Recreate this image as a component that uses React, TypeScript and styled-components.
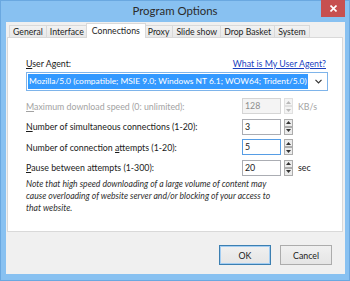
import React from "react";
import styled, { createGlobalStyle, css } from "styled-components";

const Global = createGlobalStyle`
  html, body { margin: 0; padding: 0; }
  body { width: 350px; height: 281px; overflow: hidden; font-family: Lato, "Noto Sans", sans-serif; }
`;

const Window = styled.div`
  width: 350px;
  height: 281px;
  box-sizing: border-box;
  background: #88c1f1;
  border: 1px solid #6aa8e0;
  display: flex;
  flex-direction: column;
`;

const TitleBar = styled.div`
  height: 21px;
  display: grid;
  grid-template-columns: 1fr auto 1fr;
  align-items: start;
`;

const Title = styled.div`
  grid-column: 2;
  font-family: Lato, sans-serif;
  font-size: 11.4px;
  line-height: 20px;
  color: #2b2b2b;
  white-space: nowrap;
`;

const CloseBtn = styled.div`
  grid-column: 3;
  justify-self: end;
  margin-right: 4px;
  margin-top: -1px;
  width: 24px;
  height: 17px;
  background: #c75050;
  color: #fff;
  display: flex;
  align-items: center;
  justify-content: center;
`;

const Client = styled.div`
  flex: 1;
  margin: 0 4px 6px 5px;
  background: #f0f0f0;
  display: flex;
  flex-direction: column;
  padding: 1px 2px 0 1px;
`;

const TabRow = styled.div`
  display: flex;
  align-items: flex-end;
  padding-left: 3px;
  height: 14px;
  position: relative;
  z-index: 1;
`;

const Tab = styled.div<{ $active?: boolean }>`
  box-sizing: border-box;
  font-size: 8.7px;
  color: #1e1e1e;
  border: 1px solid #d9d9d9;
  border-bottom: none;
  margin-left: -1px;
  padding: 0 3px;
  height: 12px;
  line-height: 11px;
  white-space: nowrap;
  background: linear-gradient(#f2f2f2, #e8e8e8);
  ${(p) =>
    p.$active &&
    css`
      height: 15px;
      line-height: 13px;
      background: #fff;
      margin: 0 -1px -1px -2px;
      padding: 0 5px;
      position: relative;
      z-index: 2;
    `}
`;

const Panel = styled.div`
  height: 195px;
  box-sizing: border-box;
  background: #fff;
  border: 1px solid #d9d9d9;
  padding: 18px 14px 0 18px;
  display: flex;
  flex-direction: column;
  font-size: 8.8px;
  color: #1a1a1a;
  white-space: nowrap;
`;

const LabelRow = styled.div`
  display: flex;
  justify-content: space-between;
  align-items: center;
  height: 14px;
  padding-right: 2px;
`;

const Link = styled.span`
  color: #1a3fbf;
  text-decoration: underline;
`;

const Combo = styled.div`
  margin-top: 2px;
  height: 19px;
  box-sizing: border-box;
  border: 1px solid #7eb4ea;
  display: flex;
  align-items: center;
  padding: 0 1px;
  overflow: hidden;
`;

const Selected = styled.span`
  background: #3399ff;
  color: #fff;
  font-size: 8.45px;
  line-height: 15px;
  padding: 0 1px;
`;

const Chevron = styled.span`
  margin-left: auto;
  margin-right: 4px;
  display: flex;
`;

const Rows = styled.div`
  margin-top: 7px;
  display: flex;
  flex-direction: column;
  gap: 4.5px;
`;

const Row = styled.div<{ $disabled?: boolean }>`
  display: grid;
  grid-template-columns: 216px 40px 14px auto;
  align-items: center;
  height: 16px;
  color: ${(p) => (p.$disabled ? "#a3a3a3" : "#1a1a1a")};
`;

const Box = styled.div<{ $disabled?: boolean; $focus?: boolean }>`
  box-sizing: border-box;
  height: 16px;
  width: 39px;
  border: 1px solid ${(p) => (p.$focus ? "#569de5" : p.$disabled ? "#d5d5d5" : "#abadb3")};
  background: ${(p) => (p.$disabled ? "#f4f4f4" : "#fff")};
  color: ${(p) => (p.$disabled ? "#8d8d8d" : "#1a1a1a")};
  padding-left: 2px;
  line-height: 14px;
`;

const Spin = styled.div`
  display: flex;
  flex-direction: column;
  margin-left: 2px;
  width: 9px;
`;

const SpinBtn = styled.div<{ $disabled?: boolean }>`
  height: 8px;
  box-sizing: border-box;
  border: 1px solid ${(p) => (p.$disabled ? "#e0e0e0" : "#acacac")};
  background: ${(p) => (p.$disabled ? "#f4f4f4" : "#ececec")};
  display: flex;
  align-items: center;
  justify-content: center;
`;

const Unit = styled.span`
  padding-left: 2px;
`;

const Note = styled.div`
  margin-top: 2px;
  font-style: italic;
  font-size: 8.6px;
  color: #2e2e2e;
  line-height: 12px;
`;

const Footer = styled.div`
  flex: 1;
  display: flex;
  justify-content: flex-end;
  align-items: center;
  gap: 9px;
  padding-right: 11px;
  padding-top: 4px;
`;

const Button = styled.div<{ $default?: boolean }>`
  box-sizing: border-box;
  width: 52px;
  height: 20px;
  border: 1px solid ${(p) => (p.$default ? "#3c7fb1" : "#acacac")};
  ${(p) => p.$default && css`box-shadow: inset 0 0 0 1px #a3cdf2;`}
  background: linear-gradient(#f0f0f0, #e5e5e5);
  font-size: 8.8px;
  color: #1a1a1a;
  display: flex;
  align-items: center;
  justify-content: center;
`;

const U = styled.span`
  text-decoration: underline;
`;

function Arrow({ up, disabled }: { up?: boolean; disabled?: boolean }) {
  return (
    <svg width="5" height="3" viewBox="0 0 5 3">
      <polygon
        points={up ? "0,3 5,3 2.5,0" : "0,0 5,0 2.5,3"}
        fill={disabled ? "#b8b8b8" : "#333"}
      />
    </svg>
  );
}

function Spinner({ disabled }: { disabled?: boolean }) {
  return (
    <Spin>
      <SpinBtn $disabled={disabled}>
        <Arrow up disabled={disabled} />
      </SpinBtn>
      <SpinBtn $disabled={disabled}>
        <Arrow disabled={disabled} />
      </SpinBtn>
    </Spin>
  );
}

const tabs = ["General", "Interface", "Connections", "Proxy", "Slide show", "Drop Basket", "System"];

export default function App() {
  return (
    <>
      <Global />
      <Window>
        <TitleBar>
          <Title>Program Options</Title>
          <CloseBtn>
            <svg width="7" height="7" viewBox="0 0 7 7">
              <path d="M0.5 0.5 L6.5 6.5 M6.5 0.5 L0.5 6.5" stroke="#fff" strokeWidth="1.6" />
            </svg>
          </CloseBtn>
        </TitleBar>
        <Client>
          <TabRow>
            {tabs.map((t) => (
              <Tab key={t} $active={t === "Connections"}>
                {t}
              </Tab>
            ))}
          </TabRow>
          <Panel>
            <LabelRow>
              <span>
                <U>U</U>ser Agent:
              </span>
              <Link>What is My User Agent?</Link>
            </LabelRow>
            <Combo>
              <Selected>Mozilla/5.0 (compatible; MSIE 9.0; Windows NT 6.1; WOW64; Trident/5.0)</Selected>
              <Chevron>
                <svg width="7" height="5" viewBox="0 0 7 5">
                  <path d="M0.5 0.8 L3.5 3.8 L6.5 0.8" fill="none" stroke="#333" strokeWidth="1.2" />
                </svg>
              </Chevron>
            </Combo>
            <Rows>
              <Row $disabled>
                <span>
                  <U>M</U>aximum download speed (0: unlimited):
                </span>
                <Box $disabled>128</Box>
                <Spinner disabled />
                <Unit>KB/s</Unit>
              </Row>
              <Row>
                <span>
                  <U>N</U>umber of simultaneous connections (1-20):
                </span>
                <Box>3</Box>
                <Spinner />
                <span />
              </Row>
              <Row>
                <span>
                  Number of connection <U>a</U>ttempts (1-20):
                </span>
                <Box $focus>5</Box>
                <Spinner />
                <span />
              </Row>
              <Row>
                <span>
                  <U>P</U>ause between attempts (1-300):
                </span>
                <Box>20</Box>
                <Spinner />
                <Unit>sec</Unit>
              </Row>
            </Rows>
            <Note>
              Note that high speed downloading of a large volume of content may
              <br />
              cause overloading of website server and/or blocking of your access to
              <br />
              that website.
            </Note>
          </Panel>
          <Footer>
            <Button $default>OK</Button>
            <Button>Cancel</Button>
          </Footer>
        </Client>
      </Window>
    </>
  );
}
